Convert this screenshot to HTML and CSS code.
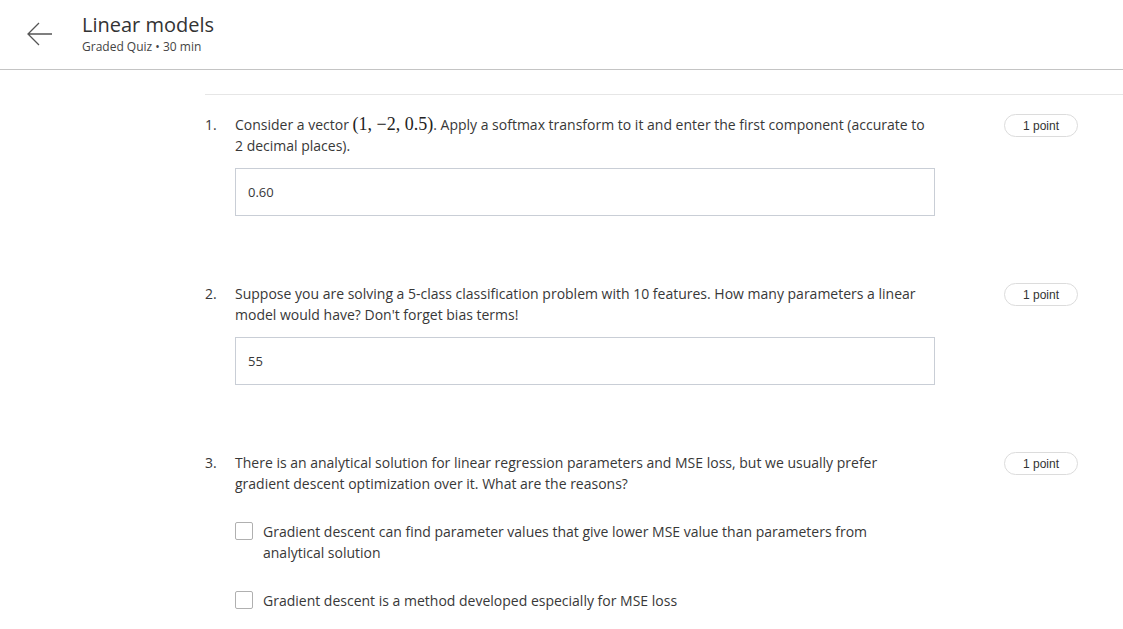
FILE: index.html
```html
<!DOCTYPE html>
<html>
<head>
<meta charset="utf-8">
<link rel="stylesheet" href="styles.css">
</head>
<body>
<header class="top">
  <button class="back" aria-label="Back">
    <svg width="26" height="24" viewBox="0 0 26 24"><path d="M25 12H2M12 1L1 12l11 11" fill="none" stroke="#555" stroke-width="1.3"/></svg>
  </button>
  <div class="heading">
    <h1>Linear models</h1>
    <div class="sub">Graded Quiz • 30 min</div>
  </div>
</header>
<main class="content">
  <section class="q">
    <div class="num">1.</div>
    <div class="body">
      <p class="text"><span>Consider a vector </span><span class="math">(1, −2, 0.5)</span><span>. Apply a softmax transform to it and enter the first component (accurate to</span> <span>2 decimal places).</span></p>
      <div class="input">0.60</div>
    </div>
    <div class="pill">1 point</div>
  </section>
  <section class="q">
    <div class="num">2.</div>
    <div class="body">
      <p class="text">Suppose you are solving a 5-class classification problem with 10 features. How many parameters a linear model would have? Don't forget bias terms!</p>
      <div class="input">55</div>
    </div>
    <div class="pill">1 point</div>
  </section>
  <section class="q">
    <div class="num">3.</div>
    <div class="body">
      <p class="text">There is an analytical solution for linear regression parameters and MSE loss, but we usually prefer gradient descent optimization over it. What are the reasons?</p>
      <div class="options">
        <label class="opt"><span class="box"></span><span class="opt-text">Gradient descent can find parameter values that give lower MSE value than parameters from analytical solution</span></label>
        <label class="opt"><span class="box"></span><span class="opt-text">Gradient descent is a method developed especially for MSE loss</span></label>
      </div>
    </div>
    <div class="pill">1 point</div>
  </section>
</main>
</body>
</html>
```
FILE: styles.css
```css
* { box-sizing: border-box; }
html, body { margin: 0; padding: 0; background: #fff; }
body {
  font-family: "Open Sans", "Liberation Sans", sans-serif;
  color: #383838;
  overflow: hidden;
}
.top {
  height: 70px;
  border-bottom: 1px solid #c4c4c4;
  display: flex;
  align-items: flex-start;
}
.back {
  border: 0;
  background: none;
  padding: 0;
  margin: 22px 0 0 27px;
  width: 26px;
  height: 24px;
  display: block;
}
.back svg { display: block; }
.heading { margin: 11px 0 0 29px; }
.heading h1 {
  margin: 0;
  font-size: 20px;
  font-weight: 400;
  line-height: 27px;
  color: #333;
}
.sub {
  font-size: 12px;
  line-height: 15px;
  margin-top: 1px;
  color: #444;
}
.content {
  margin: 24px 0 0 205px;
  border-top: 1px solid #e6e6e6;
  padding: 19px 45px 0 0;
}
.q {
  display: flex;
  align-items: flex-start;
  margin-bottom: 67px;
}
.num {
  width: 30px;
  font-size: 14px;
  line-height: 21px;
}
.body { width: 700px; }
.text {
  margin: 0;
  font-size: 14px;
  line-height: 21px;
}
.math {
  font-family: "Liberation Serif", "DejaVu Serif", serif;
  font-size: 18px;
  line-height: 1;
  color: #222;
}
.input {
  margin-top: 12px;
  height: 48px;
  border: 1px solid #c9ced6;
  padding: 0 12px;
  font-size: 13px;
  line-height: 47px;
}
.pill {
  margin-left: auto;
  width: 74px;
  height: 23px;
  border: 1px solid #dcdcdc;
  border-radius: 12px;
  font-family: "Liberation Sans", Arial, sans-serif;
  font-size: 12px;
  line-height: 22px;
  text-align: center;
  color: #333;
}
.options {
  margin-top: 27px;
  display: flex;
  flex-direction: column;
  gap: 27px;
}
.opt {
  display: flex;
  align-items: flex-start;
}
.box {
  flex: none;
  width: 18px;
  height: 18px;
  border: 1px solid #b0b0b0;
  border-radius: 2px;
  margin-top: 1px;
  margin-right: 10px;
}
.opt-text {
  font-size: 14px;
  line-height: 21px;
  max-width: 640px;
}
```
